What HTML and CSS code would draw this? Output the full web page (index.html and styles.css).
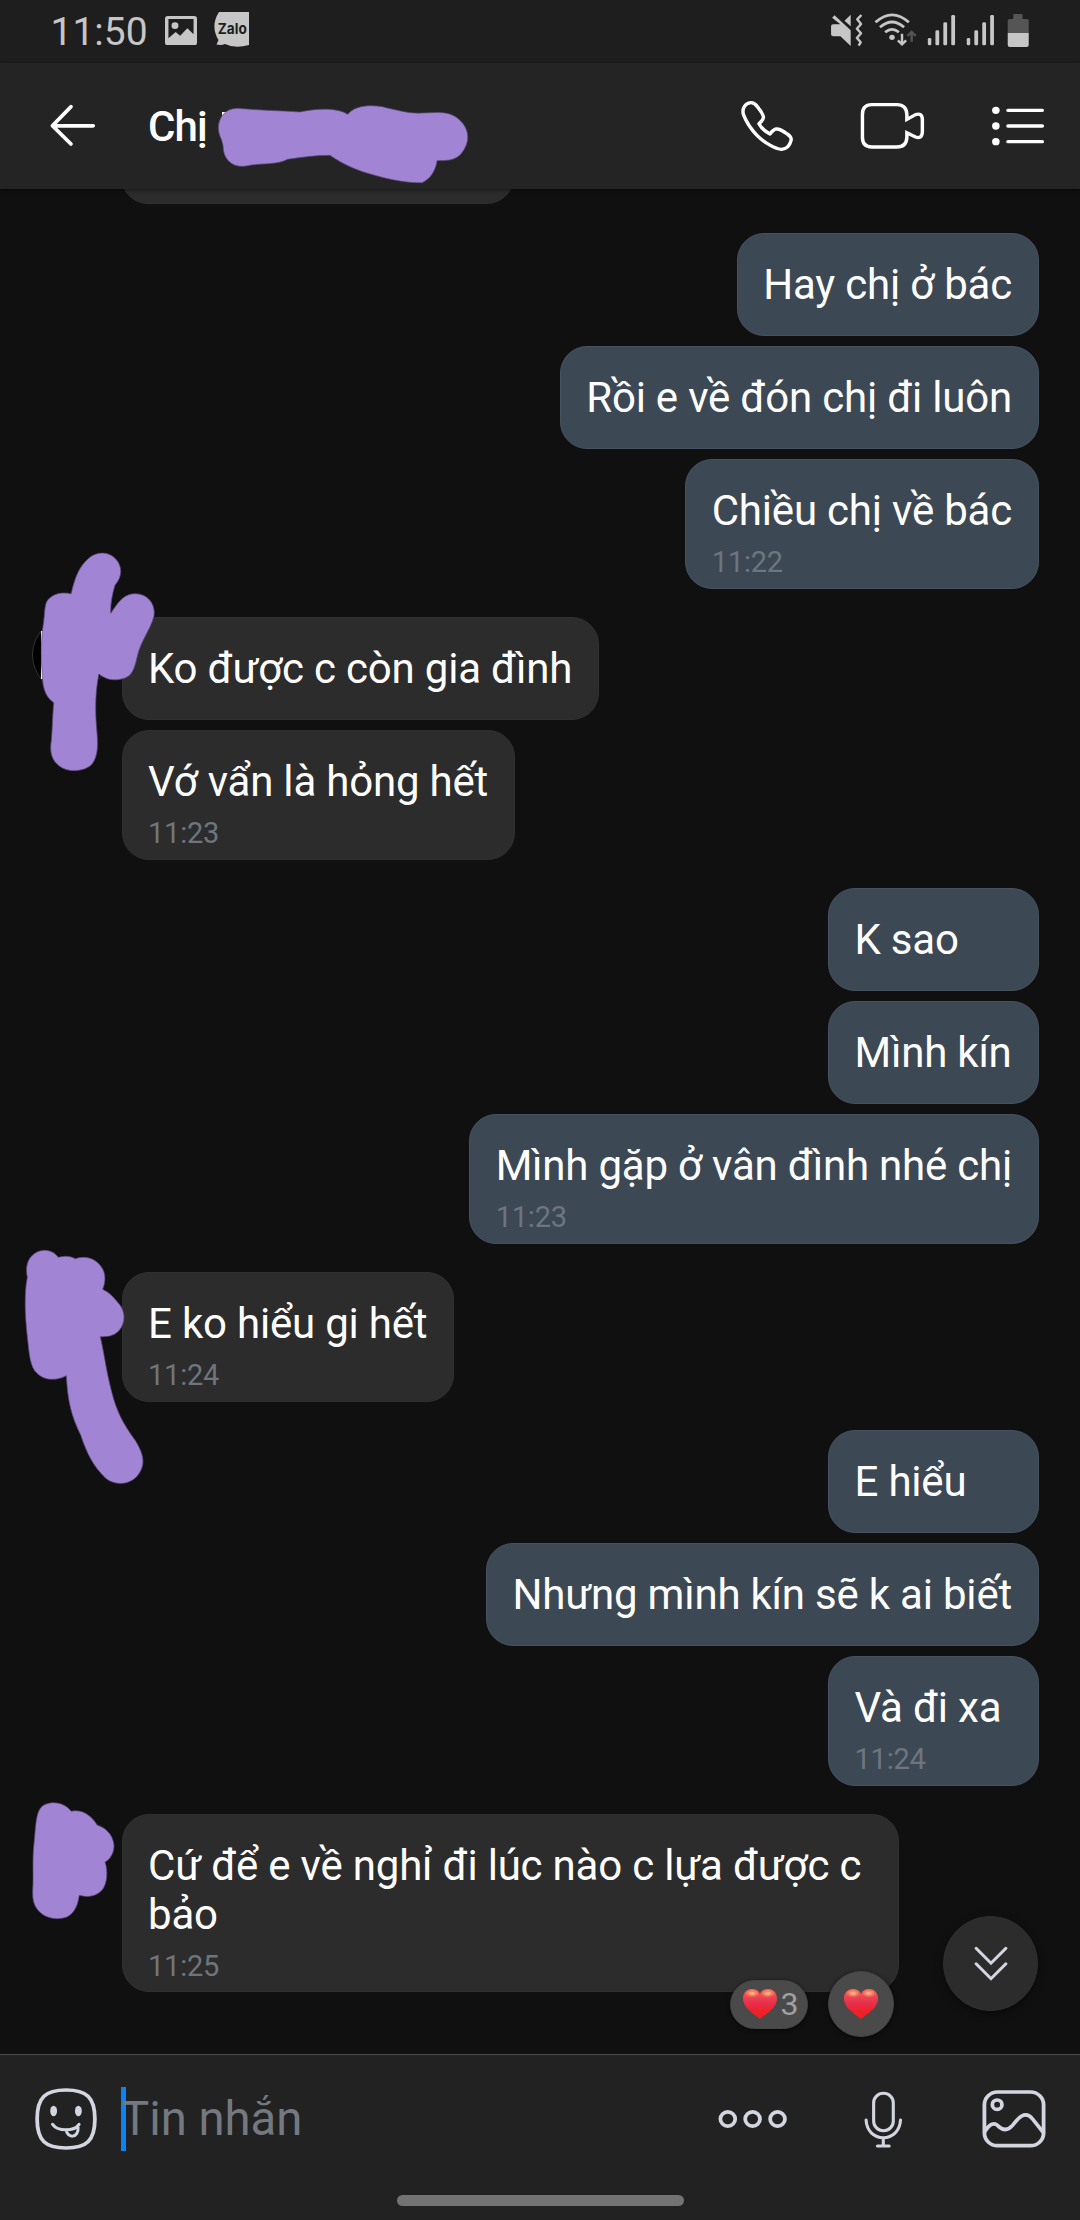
FILE: index.html
```html
<!DOCTYPE html>
<html lang="vi">
<head>
<meta charset="utf-8">
<title>Chat</title>
<link rel="stylesheet" href="styles.css">
</head>
<body>
<div class="screen">
  <div class="status">
    <span class="clock">11:50</span>
    <svg class="st-picture" viewBox="479 47 93 88" preserveAspectRatio="none"><path fill="#c6c6c6" fill-rule="evenodd" d="M487 47H564Q572 47 572 55V127Q572 135 564 135H487Q479 135 479 127V55Q479 47 487 47ZM489 56V114L510 95L523 106L544 84L562 102V56Z"/><circle cx="508" cy="76" r="10" fill="#c6c6c6"/></svg>
    <svg class="st-zalo" viewBox="214 12 36 36"><path fill="#c6c6c6" d="M219 12H249V45Q235 49 225 44Q221 45.500 216.500 44.500L218.500 40Q210 26 219 12Z"/><text class="zalo-text" x="217.800" y="34.200" textLength="29" lengthAdjust="spacingAndGlyphs">Zalo</text></svg>
    <svg class="st-system" viewBox="840 36 590 110" preserveAspectRatio="none">
      <g fill="#c6c6c6">
        <path d="M873 73L849 53L856 46L903 91V138L873 109H852Q846 109 846 103V79Q846 73 852 73Z"/>
        <path d="M885 62L903 44V79Z"/>
        <circle cx="1023" cy="112" r="8"/>
      </g>
      <g fill="none" stroke="#c6c6c6" stroke-width="8">
        <path d="M934 45L922 58L933 72L921 86L933 100L921 114L932 127L926 137" stroke-width="7" stroke-linejoin="round"/>
        <path d="M975 67Q1023 22 1072 67M988 82Q1023 50 1058 82M1003 97Q1023 79 1043 97"/>
        <path d="M1052 101V133M1040 121L1052 133L1064 121" stroke-width="7"/>
        <path d="M1080 125V96M1068 108L1080 96L1092 108" stroke="#555" stroke-width="7"/>
      </g>
      <g fill="#c6c6c6">
        <rect x="1127" y="114" width="10" height="22" rx="4"/><rect x="1149" y="91" width="11" height="45" rx="4"/><rect x="1172" y="67" width="11" height="69" rx="4"/><rect x="1195" y="45" width="11" height="91" rx="4"/>
        <rect x="1240" y="114" width="10" height="22" rx="4"/><rect x="1262" y="91" width="11" height="45" rx="4"/><rect x="1285" y="67" width="11" height="69" rx="4"/><rect x="1308" y="45" width="11" height="91" rx="4"/>
      </g>
      <path fill="#555" d="M1375 57V45Q1375 42 1378 42H1399Q1402 42 1402 45V57H1415Q1420 57 1420 62V100H1359V62Q1359 57 1364 57Z"/>
      <path fill="#c6c6c6" d="M1359 99H1420V135Q1420 141 1414 141H1365Q1359 141 1359 135Z"/>
    </svg>
  </div>

  <header class="header">
    <svg class="ic-back" viewBox="142 312 140 138" preserveAspectRatio="none"><path d="M206 323L152 380.500L206 435M152 380.500H271"/></svg>
    <h1 class="title">Chị</h1>
    <svg class="ic-phone" viewBox="578 297 162 162" preserveAspectRatio="none"><path d="M612 308C625 307 629 317 635 325C642 335 649 344 649 352C649 361 642 366 636 371C643 384 654 395 668 402C673 395 678 388 686 387C697 386 709 395 718 402C727 408 731 414 729 422C725 438 717 447 702 448C683 447 650 427 631 407C615 390 598 363 591 344C586 327 595 310 612 308Z"/></svg>
    <svg class="ic-video" viewBox="926 297 194 162" preserveAspectRatio="none"><path d="M963 314H1036Q1064 314 1065 344V358L1090 344Q1109 337 1110 358V396Q1109 418 1090 411L1065 398V412Q1064 441 1036 441H963Q936 441 936 412V344Q936 314 963 314Z" stroke-linejoin="miter"/></svg>
    <svg class="ic-list" viewBox="1306 297 162 162" preserveAspectRatio="none"><path d="M1358 331H1458M1358 378H1458M1358 425H1458"/><g fill="#fff" stroke="none"><circle cx="1323" cy="331" r="11"/><circle cx="1323" cy="378" r="11"/><circle cx="1323" cy="425" r="11"/></g></svg>
  </header>

  <main class="chat">
    <div class="bubble cut"></div>
    <section class="group sent">
      <div class="bubble">Hay chị ở bác</div>
      <div class="bubble">Rồi e về đón chị đi luôn</div>
      <div class="bubble">Chiều chị về bác<time>11:22</time></div>
    </section>
    <section class="group received">
      <div class="avatar"></div>
      <div class="stack">
        <div class="bubble">Ko được c còn gia đình</div>
        <div class="bubble">Vớ vẩn là hỏng hết<time>11:23</time></div>
      </div>
    </section>
    <section class="group sent">
      <div class="bubble">K sao</div>
      <div class="bubble">Mình kín</div>
      <div class="bubble">Mình gặp ở vân đình nhé chị<time>11:23</time></div>
    </section>
    <section class="group received">
      <div class="stack">
        <div class="bubble">E ko hiểu gi hết<time>11:24</time></div>
      </div>
    </section>
    <section class="group sent">
      <div class="bubble">E hiểu</div>
      <div class="bubble">Nhưng mình kín sẽ k ai biết</div>
      <div class="bubble">Và đi xa<time>11:24</time></div>
    </section>
    <section class="group received">
      <div class="stack">
        <div class="bubble wide">Cứ để e về nghỉ đi lúc nào c lựa được c bảo<time>11:25</time>
          <div class="reactions">
            <span class="count"><svg class="heart" viewBox="0 0 100 90" preserveAspectRatio="none"><defs><linearGradient id="red" x1="0" y1="0" x2="0" y2="1"><stop offset="0" stop-color="#f4624f"/><stop offset=".45" stop-color="#e8304f"/><stop offset=".75" stop-color="#f02028"/><stop offset="1" stop-color="#ee2020"/></linearGradient><radialGradient id="shine"><stop offset="0" stop-color="#ffd9a0" stop-opacity=".95"/><stop offset="1" stop-color="#ff9a70" stop-opacity="0"/></radialGradient></defs><path fill="url(#red)" d="M50 90C38 78 0 58 0 29C0 10 12 0 26 0C38 0 46 6 50 14C54 6 62 0 74 0C88 0 100 10 100 29C100 58 62 78 50 90Z"/><ellipse cx="27" cy="13" rx="22" ry="13" fill="url(#shine)"/><ellipse cx="73" cy="13" rx="22" ry="13" fill="url(#shine)"/></svg>3</span>
            <span class="react"><svg class="heart" viewBox="0 0 100 90" preserveAspectRatio="none"><path fill="url(#red)" d="M50 90C38 78 0 58 0 29C0 10 12 0 26 0C38 0 46 6 50 14C54 6 62 0 74 0C88 0 100 10 100 29C100 58 62 78 50 90Z"/><ellipse cx="27" cy="13" rx="22" ry="13" fill="url(#shine)"/><ellipse cx="73" cy="13" rx="22" ry="13" fill="url(#shine)"/></svg></span>
          </div>
        </div>
      </div>
    </section>
    <button class="jump" type="button" aria-label="Xuống cuối"><svg viewBox="1256 498 104 112" preserveAspectRatio="none"><path d="M1265 508L1308 553L1351 508M1265 555L1308 600L1351 555"/></svg></button>
  </main>

  <footer class="composer">
    <div class="tools">
      <svg class="ic-smile" viewBox="96 165 192 198" preserveAspectRatio="none"><path stroke-width="11" d="M192 177C251 177 276 198 276 264C276 330 251 351 192 351C133 351 108 330 108 264C108 198 133 177 192 177Z"/><path stroke-width="9" d="M153 280C168 302 216 302 230 280M193 297C194 322 230 324 227 288"/><g fill="#d3d6e0" stroke="none"><ellipse cx="156" cy="240" rx="10" ry="16"/><ellipse cx="228" cy="240" rx="10" ry="16"/></g></svg>
      <div class="field"><span>Tin nhắn</span></div>
      <svg class="ic-more" viewBox="515 165 201 198" preserveAspectRatio="none"><g stroke-width="11"><circle cx="543.500" cy="264" r="21.500"/><circle cx="615.500" cy="264" r="21.500"/><circle cx="688" cy="264" r="21.500"/></g></svg>
      <svg class="ic-mic" viewBox="940 165 112 198" preserveAspectRatio="none"><g stroke-width="9"><rect x="968" y="187" width="57" height="112" rx="28"/><path d="M946 267C948 301 970 320 996 320C1022 320 1044 301 1046 267M996 320V345M979 345H1013"/></g></svg>
      <svg class="ic-image" viewBox="1283 165 186 198" preserveAspectRatio="none"><g stroke-width="11"><rect x="1290" y="183" width="172" height="161" rx="38"/><circle cx="1327" cy="221" r="14"/><path d="M1291 302C1305 278 1319 271 1333 288C1346 299 1358 299 1371 284C1387 263 1408 235 1430 264L1461 304"/></g></svg>
    </div>
    <div class="home-bar"></div>
  </footer>

  <svg class="marker" viewBox="0 0 1080 2220">
    <path fill="#fff" stroke="none" d="M222 112H226V143H222ZM252 110H257V114H252ZM41 631H44V679H41Z"/>
    <path transform="scale(.3444 .3333)" d="M690 325C750 331 815 332 870 336C920 325 980 322 1010 343C1030 317 1070 314 1110 320C1150 330 1190 342 1230 339C1270 337 1300 334 1325 352C1365 382 1367 425 1340 460C1322 482 1300 482 1269 482C1265 512 1250 536 1226 548C1180 550 1130 538 1085 525C1040 513 1000 496 958 466C915 466 875 472 835 478C805 496 760 488 715 498C675 505 648 477 648 440C646 415 635 413 634 382C636 350 655 325 690 325Z"/>
    <path transform="translate(0 530) scale(.3954 .3333)" d="M180 191C190 140 200 110 225 84C245 64 275 64 292 86C310 108 310 140 291 165C283 195 279 225 280 250C298 218 312 192 340 191C375 190 395 225 389 260C380 300 355 335 347 380C340 415 335 440 310 446C285 455 265 446 250 432C242 480 240 530 244 590C248 640 250 680 230 706C210 726 170 728 150 708C130 690 125 665 130 630C133 590 133 550 136 518C112 500 107 465 107 430C103 380 104 320 110 280C114 245 112 222 122 208C138 190 155 186 180 191Z"/>
    <path transform="translate(0 1230) scale(.3333)" d="M175 82C193 78 208 77 226 86C250 78 275 82 293 98C317 119 320 148 308 178C330 188 345 207 360 225C378 251 375 280 358 301C342 318 325 321 301 320C313 372 318 420 335 485C350 545 370 582 405 630C433 675 438 705 412 738C388 765 345 768 317 745C277 705 260 668 242 615C208 545 203 500 199 437C165 455 130 450 111 430C90 410 88 375 82 320C75 260 72 190 82 142C75 111 83 83 106 69C130 54 160 61 175 82Z"/>
    <path transform="translate(0 1780) scale(.3444 .3333)" d="M207 94C238 87 264 105 282 135C306 143 327 162 331 195C332 215 321 239 305 246C313 270 313 310 296 331C278 350 255 353 230 346C226 374 218 399 194 411C170 420 138 418 116 397C98 378 94 361 95 330C98 290 93 240 99 188C104 140 103 98 122 79C145 60 188 66 207 94Z"/>
  </svg>
</div>
</body>
</html>
```
FILE: styles.css
```css
* { box-sizing: border-box; }
body { margin: 0; background: #101010; font-family: Roboto, "Noto Sans", sans-serif; color: #fff; }
svg { display: block; flex: none; }

.screen { position: relative; display: flex; flex-direction: column; width: 1080px; height: 2220px; overflow: hidden; }

.status { display: flex; align-items: flex-start; height: 63px; padding-left: 50.500px; background: #1e1e1e; }
.clock { width: 114.500px; font-size: 39px; line-height: 46px; padding-top: 9px; color: #c6c6c6; }
.st-picture { width: 32px; height: 29.300px; margin: 15.700px 17px 0 0; }
.st-zalo { width: 36px; height: 36px; margin-top: 12px; }
.zalo-text { font: 700 15px Inter, sans-serif; fill: #1e1e1e; }
.st-system { width: 203.200px; height: 36.700px; margin: 12px 47.500px 0 auto; }

.header { position: relative; z-index: 1; display: flex; align-items: center; height: 126px; padding: 0 34.500px 0 49px; background: #242424; box-shadow: 0 1px 4px #0008; }
.header svg { height: 54px; fill: none; stroke: #fff; stroke-width: 10; stroke-linecap: round; stroke-linejoin: round; }
.header .ic-back { width: 48px; height: 46px; stroke-width: 11; }
.title { flex: 1; margin: 0 0 0 51px; font-size: 42px; font-weight: 500; line-height: 49px; letter-spacing: -.9px; }
.header .ic-phone, .header .ic-list { width: 55.800px; }
.header .ic-video { width: 66.800px; margin: 0 64px; }

.chat { position: relative; flex: 1; display: flex; flex-direction: column; gap: 28px; }
.group { display: flex; gap: 10px; }
.sent { flex-direction: column; align-items: flex-end; padding-right: 41px; }
.received { padding-left: 32px; }
.stack { display: flex; flex-direction: column; align-items: flex-start; gap: 10px; margin-left: auto; width: 958.500px; }
.avatar { width: 76px; height: 76px; margin-right: -10px; border: 1px solid #333; border-radius: 50%; background: #000; }
.bubble { position: relative; padding: 26px 26px 26px 25.500px; border: 1px solid #303030; border-radius: 27px; background: #2c2c2c; font-size: 42px; line-height: 49px; letter-spacing: -.2px; white-space: nowrap; }
.sent .bubble { min-width: 211px; border-color: #46525f; background: #3d4855; }
.cut { width: 393px; height: 60px; margin: -45px 0 1px 121px; flex: none; }
.bubble time { display: block; margin: 10px 0 -17px; font-size: 29px; line-height: 34px; color: #70757c; }
.sent time { color: #6d757f; }
.wide { width: 777px; height: 178px; white-space: normal; }

.reactions { position: absolute; right: 4px; bottom: -46px; display: flex; align-items: center; gap: 20px; }
.count, .react { display: flex; align-items: center; background: #4a4a4a; border: 1px solid #444; box-shadow: 0 1px 4px #000a; }
.count { width: 78px; height: 49px; padding-left: 12px; gap: 4px; border-radius: 25px; font-size: 32px; color: #a0a0a0; }
.react { justify-content: center; width: 66px; height: 66px; border-radius: 50%; }
.heart { width: 34px; height: 30px; }

.jump { position: absolute; left: 943px; top: 1727px; display: grid; place-items: center; width: 95px; height: 95px; padding: 0; border: 1px solid #303030; border-radius: 50%; background: #2c2c2c; box-shadow: 0 3px 8px #0006; }
.jump svg { width: 36px; height: 37px; fill: none; stroke: #d3d6e0; stroke-width: 9; stroke-linecap: round; }

.composer { height: 166px; border-top: 1px solid #4b4b4b; background: #222; }
.tools { display: flex; align-items: center; height: 127px; padding: 0 34px 0 33px; }
.tools svg { height: 66px; fill: none; stroke: #d3d6e0; stroke-linecap: round; }
.ic-smile { width: 66px; }
.field { flex: 1; display: flex; align-items: center; height: 64px; margin-left: 22px; background: linear-gradient(#0a84f5, #0a84f5) left / 5px 100% no-repeat; font-size: 47.250px; line-height: 56px; color: #747980; }
.ic-more { width: 69.200px; margin-right: 77px; }
.ic-mic { width: 38.600px; margin-right: 79.500px; }
.ic-image { width: 64px; }
.home-bar { width: 287px; height: 11px; margin: 13px auto 0; border-radius: 6px; background: #737373; }

.marker { position: absolute; z-index: 2; left: 0; top: 0; width: 1080px; height: 2220px; fill: #a184d4; stroke: #5b4a78; stroke-width: 2; pointer-events: none; }
```
